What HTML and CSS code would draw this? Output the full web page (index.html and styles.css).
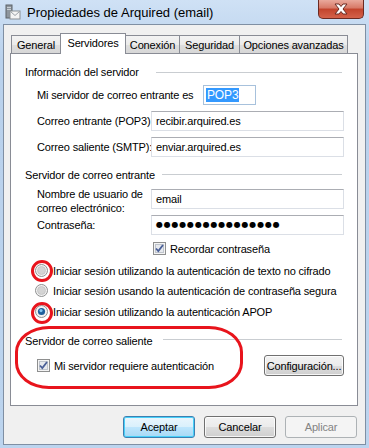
FILE: index.html
```html
<!DOCTYPE html>
<html lang="es">
<head>
  <meta charset="UTF-8">
  <meta name="viewport" content="width=device-width, initial-scale=1.0">
  <title>Propiedades de Arquired (email)</title>
  <link rel="stylesheet" href="styles.css">
</head>
<body>
  <div class="window">
    <!-- Title bar -->
    <div class="titlebar">
      <svg class="app-icon" width="16" height="16" viewBox="0 0 16 16">
        <rect x="1" y="1" width="6" height="13" fill="#8e969e" stroke="#5d6368" stroke-width="1"/>
        <rect x="2" y="3" width="4" height="1" fill="#c9cfd4"/>
        <rect x="2" y="5" width="4" height="1" fill="#c9cfd4"/>
        <rect x="5" y="7" width="10" height="8" fill="#f4f4f4" stroke="#8a8f94" stroke-width="1"/>
        <path d="M5.5 7.5 L10 11.5 L14.5 7.5" fill="none" stroke="#9aa0a6" stroke-width="1"/>
      </svg>
      <span class="title">Propiedades de Arquired (email)</span>
      <div class="close-btn">
        <svg width="16" height="12" viewBox="0 0 16 12">
          <path d="M2 1 L6 1 L8 3.5 L10 1 L14 1 L10 6 L14 11 L10 11 L8 8.5 L6 11 L2 11 L6 6 Z" fill="#fff" stroke="#6a2a22" stroke-width="1" stroke-linejoin="round"/>
        </svg>
      </div>
    </div>

    <div class="client">
      <!-- Tabs -->
      <div class="tabs">
        <div class="tab tab-general">General</div>
        <div class="tab tab-servers active">Servidores</div>
        <div class="tab tab-conn">Conexión</div>
        <div class="tab tab-sec">Seguridad</div>
        <div class="tab tab-adv">Opciones avanzadas</div>
      </div>

      <!-- Servidores panel -->
      <div class="panel">
        <div class="group-title gt-info">
          <span>Información del servidor</span><i class="rule rule-info"></i>
        </div>
        <div class="row row-pop">
          <label>Mi servidor de correo entrante es</label>
          <div class="combo"><span class="selected-text">POP3</span></div>
        </div>
        <div class="row row-gap">
          <label>Correo entrante (POP3):</label>
          <div class="textbox">recibir.arquired.es</div>
        </div>
        <div class="row row-gap">
          <label>Correo saliente (SMTP):</label>
          <div class="textbox">enviar.arquired.es</div>
        </div>

        <div class="group-title gt-in">
          <span>Servidor de correo entrante</span><i class="rule rule-in"></i>
        </div>
        <div class="row row-user">
          <label class="two-lines">Nombre de usuario de<br>correo electrónico:</label>
          <div class="textbox">email</div>
        </div>
        <div class="row row-gap">
          <label>Contraseña:</label>
          <div class="textbox password">●●●●●●●●●●●●●●●●</div>
        </div>
        <div class="check-row remember">
          <svg class="checkbox" width="13" height="13" viewBox="0 0 13 13">
            <rect x="0.5" y="0.5" width="12" height="12" fill="#f4f4f4" stroke="#8e8f8f"/>
            <rect x="2.5" y="2.5" width="8" height="8" fill="#e6e9ee" stroke="#bfc4cc"/>
            <path d="M3 6.5 L5.3 9 L10 3" fill="none" stroke="#4a5f97" stroke-width="1.8"/>
          </svg>
          <span>Recordar contraseña</span>
        </div>

        <div class="radio-row r1">
          <svg class="radio" width="13" height="13" viewBox="0 0 13 13">
            <circle cx="6.5" cy="6.5" r="6" fill="#f2f2f2" stroke="#8e8f8f"/>
            <circle cx="6.5" cy="6.5" r="4" fill="#d4d4d4" stroke="#c2c2c2" stroke-width="0.8"/>
          </svg>
          <span>Iniciar sesión utilizando la autenticación de texto no cifrado</span>
        </div>
        <div class="radio-row r2">
          <svg class="radio" width="13" height="13" viewBox="0 0 13 13">
            <circle cx="6.5" cy="6.5" r="6" fill="#f2f2f2" stroke="#8e8f8f"/>
            <circle cx="6.5" cy="6.5" r="4" fill="#d4d4d4" stroke="#c2c2c2" stroke-width="0.8"/>
          </svg>
          <span>Iniciar sesión usando la autenticación de contraseña segura</span>
        </div>
        <div class="radio-row r3">
          <svg class="radio" width="13" height="13" viewBox="0 0 13 13">
            <circle cx="6.5" cy="6.5" r="6" fill="#f2f2f2" stroke="#8e8f8f"/>
            <circle cx="6.5" cy="6.5" r="3.6" fill="#1d5f9c"/>
            <circle cx="6" cy="5.6" r="1.6" fill="#7fc4f0"/>
          </svg>
          <span>Iniciar sesión utilizando la autenticación APOP</span>
        </div>

        <div class="group-title gt-out">
          <span>Servidor de correo saliente</span><i class="rule rule-out"></i>
        </div>
        <div class="out-row">
          <div class="check-row">
            <svg class="checkbox" width="13" height="13" viewBox="0 0 13 13">
              <rect x="0.5" y="0.5" width="12" height="12" fill="#f4f4f4" stroke="#8e8f8f"/>
              <rect x="2.5" y="2.5" width="8" height="8" fill="#e6e9ee" stroke="#bfc4cc"/>
              <path d="M3 6.5 L5.3 9 L10 3" fill="none" stroke="#4a5f97" stroke-width="1.8"/>
            </svg>
            <span>Mi servidor requiere autenticación</span>
          </div>
          <button class="btn btn-config">Configuración...</button>
        </div>
      </div>

      <!-- Dialog buttons -->
      <div class="buttons">
        <button class="btn btn-default">Aceptar</button>
        <button class="btn">Cancelar</button>
        <button class="btn btn-disabled">Aplicar</button>
      </div>
    </div>

    <!-- Red hand-drawn marks over the screenshot -->
    <div class="mark mark-r1"></div>
    <div class="mark mark-r3"></div>
    <div class="mark mark-out"></div>
  </div>
</body>
</html>
```

FILE: styles.css
```css
:root {
  --frame: #bcd4ee;
  --frame-dark: #7f8fa3;
  --face: #f0f0f0;
  --tab-border: #898c95;
  --text: #000;
  --mark: #e8141c;
}
* {
  box-sizing: border-box;
}
body {
  margin: 0;
  font-family: "Liberation Sans", Arial, sans-serif;
  font-size: 11px;
  letter-spacing: -0.15px;
  color: var(--text);
  white-space: nowrap;
}
.window {
  position: relative;
  width: 369px;
  height: 448px;
  padding: 0 3px 3px 3px;
  background: linear-gradient(#cfe1f5, #b9d1ec 60px, #bcd4ee);
  overflow: hidden;
}

/* Title bar */
.titlebar {
  height: 24px;
  display: flex;
  align-items: center;
}
.app-icon {
  margin: 0 6px 0 2px;
}
.title {
  font-size: 13px;
  letter-spacing: 0;
  color: #000;
  flex: 1;
}
.close-btn {
  align-self: flex-start;
  width: 46px;
  height: 19px;
  margin-right: 2px;
  border: 1px solid #6b2a22;
  border-top: none;
  border-radius: 0 0 5px 5px;
  background: linear-gradient(#e9a99c, #d77866 45%, #c2432c 50%, #d4624a);
  display: flex;
  align-items: center;
  justify-content: center;
}

/* Client area */
.client {
  height: 421px;
  border: 1px solid var(--frame-dark);
  background: var(--face);
  padding: 8px 7px 0 7px;
}
.tabs {
  display: flex;
  align-items: flex-end;
  height: 20px;
  position: relative;
  z-index: 1;
}
.tab {
  height: 18px;
  border: 1px solid var(--tab-border);
  border-bottom: none;
  background: linear-gradient(#f3f3f3, #ebebeb 50%, #dfdfdf 50%, #d7d7d7);
  text-align: center;
  line-height: 18px;
  margin-left: -1px;
}
.tab-general { width: 50px; margin-left: 0; }
.tab-servers { width: 66px; }
.tab-conn { width: 55px; }
.tab-sec { width: 61px; }
.tab-adv { width: 109px; }
.tab.active {
  height: 21px;
  margin-bottom: -1px;
  background: #fff;
  line-height: 18px;
  position: relative;
  z-index: 2;
}

.panel {
  height: 353px;
  margin-left: -1px;
  width: 348px;
  border: 1px solid var(--tab-border);
  background: #fff;
  padding: 11px 0 0 0;
}

.group-title {
  display: flex;
  align-items: center;
  justify-content: space-between;
  height: 15px;
  line-height: 15px;
  padding-left: 14px;
  padding-right: 15px;
}
.rule {
  height: 1px;
  background: #c9cdd1;
}
.rule-info { width: 186px; }
.rule-in { width: 180px; margin-top: -3px; }
.rule-out { width: 179px; margin-top: -5px; }
.gt-in { margin-top: 11px; }
.gt-out { margin-top: 15px; }

.row {
  display: flex;
  align-items: center;
  height: 20px;
  padding-left: 26px;
}
.row label {
  width: 114px;
}
.row-pop { margin-top: 5px; }
.row-gap { margin-top: 6px; }
.row-user { margin-top: 6px; }
.row-pop label { width: 166px; }
.two-lines {
  line-height: 14px;
  margin-top: 3px;
}
.textbox, .combo {
  height: 20px;
  border: 1px solid #dbdfe6;
  border-top-color: #abadb3;
  background: #fff;
  padding: 0 4px;
  line-height: 18px;
}
.textbox {
  width: 193px;
}
.combo {
  width: 53px;
  border-color: #a7c1dc;
  padding: 0 2px;
  font-size: 12px;
}
.selected-text {
  background: #3399ff;
  color: #fff;
  padding: 0 1px;
}
.password {
  font-family: "DejaVu Sans", sans-serif;
  font-size: 8px;
  letter-spacing: 0.8px;
  line-height: 18px;
}

.check-row, .radio-row {
  display: flex;
  align-items: center;
  height: 15px;
}
.checkbox, .radio {
  flex: none;
}
.check-row span {
  margin-left: 4px;
}
.radio-row {
  padding-left: 24px;
}
.radio-row span {
  margin-left: 5px;
}
.remember {
  margin-top: 6px;
  padding-left: 142px;
}
.r1 { margin-top: 7px; }
.r2 { margin-top: 5px; }
.r3 { margin-top: 6px; }

.out-row {
  display: flex;
  align-items: center;
  justify-content: space-between;
  height: 21px;
  margin-top: 6px;
  padding-left: 26px;
  padding-right: 13px;
}

/* Buttons */
.btn {
  font-family: "Liberation Sans", Arial, sans-serif;
  font-size: 11px;
  letter-spacing: -0.15px;
  color: #000;
  height: 22px;
  padding: 0;
  border: 1px solid #707070;
  border-radius: 3px;
  background: linear-gradient(#f2f2f2, #ebebeb 50%, #dddddd 50%, #cfcfcf);
  box-shadow: inset 0 0 0 1px rgba(255, 255, 255, 0.8);
}
.btn-config {
  width: 80px;
  height: 21px;
}
.buttons {
  display: flex;
  justify-content: flex-end;
  gap: 9px;
  margin-top: 10px;
  padding-right: 1px;
}
.buttons .btn {
  width: 72px;
}
.btn-default {
  border-color: #3c7fb1;
  background: linear-gradient(#eaf6fd, #d9f0fc 50%, #bee6fd 50%, #a7d9f5);
  box-shadow: inset 0 0 0 1px #48d0f9;
}
.btn-disabled {
  color: #838383;
  border-color: #adb2b5;
  background: #f4f4f4;
  box-shadow: none;
}

/* Red annotation marks */
.mark {
  position: absolute;
  border: 3px solid var(--mark);
  border-radius: 50%;
}
.mark-r1 {
  left: 31px;
  top: 260px;
  width: 22px;
  height: 22px;
}
.mark-r3 {
  left: 31px;
  top: 302px;
  width: 22px;
  height: 22px;
}
.mark-out {
  left: 15px;
  top: 326px;
  width: 228px;
  height: 63px;
  border-width: 3.5px;
  border-radius: 34px / 26px;
}
```
